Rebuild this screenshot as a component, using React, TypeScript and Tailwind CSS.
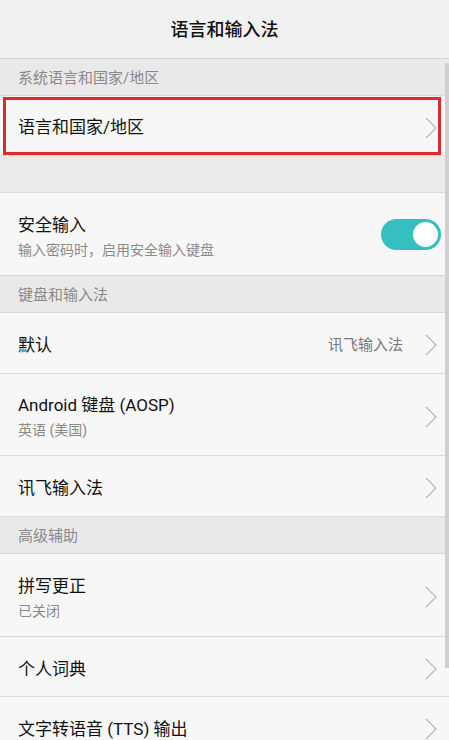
import React from 'react';

const font = { fontFamily: '"Roboto", "Noto Sans CJK SC", sans-serif' };

const Chevron = () => (
    <svg width="12" height="22" viewBox="0 0 12 22" className="shrink-0">
        <path d="M1 1 L11 11 L1 21" fill="none" stroke="#b8b8b8" strokeWidth="1.2" />
    </svg>
);

const Section = ({ title }: { title: string }) => (
    <div className="h-[37px] bg-[#e9e9e9] border-b border-[#d9d9d9] flex items-center pl-[18px] pt-[2px] text-[15px] text-[#8a8a8a]">{title}</div>
);

const Row = ({ title, sub, value, h = 'h-[60px]' }: { title: string; sub?: string; value?: string; h?: string }) => (
    <div className={`${h} bg-[#f7f7f7] border-b border-[#dcdcdc] flex items-center pl-[18px] pr-[12px] pt-[4px]`}>
        <div className="flex-1">
            <div className="text-[17px] text-[#111] leading-[24px]">{title}</div>
            {sub && <div className="text-[14px] text-[#8a8a8a] leading-[20px] mt-[3px]">{sub}</div>}
        </div>
        {value && <span className="text-[15px] text-[#777] mr-[22px]">{value}</span>}
        <Chevron />
    </div>
);

const App = () => {
    return (
        <div className="w-[449px] h-[740px] overflow-hidden bg-[#ebebeb] relative" style={font}>
            <div className="h-[59px] bg-[#f1f1f1] border-b border-[#d6d6d6] flex items-center justify-center">
                <h1 className="text-[18px] font-medium text-[#111]">语言和输入法</h1>
            </div>
            <Section title="系统语言和国家/地区" />
            <div className="h-[60px] bg-[#f7f7f7] border-b border-[#dcdcdc] pl-[3px] pr-[8px] pt-[1px]">
                <div className="h-[58px] border-[3px] border-[#dd2a2a] flex items-center pl-[12px] pr-[1px] pt-[4px]">
                    <span className="flex-1 text-[17px] text-[#111]">语言和国家/地区</span>
                    <Chevron />
                </div>
            </div>
            <div className="h-[37px] bg-[#ebebeb] border-b border-[#dcdcdc]" />
            <div className="h-[83px] bg-[#f7f7f7] border-b border-[#d6d6d6] flex items-center pl-[18px] pr-[8px]">
                <div className="flex-1 pt-[4px]">
                    <div className="text-[17px] text-[#111] leading-[24px]">安全输入</div>
                    <div className="text-[14px] text-[#8a8a8a] leading-[20px] mt-[3px]">输入密码时，启用安全输入键盘</div>
                </div>
                <div className="w-[60px] h-[31px] rounded-full bg-[#35bfc0] flex items-center justify-end pr-[3px]">
                    <div className="w-[25px] h-[25px] rounded-full bg-white" />
                </div>
            </div>
            <Section title="键盘和输入法" />
            <Row title="默认" value="讯飞输入法" h="h-[61px]" />
            <Row title="Android 键盘 (AOSP)" sub="英语 (美国)" h="h-[82px]" />
            <Row title="讯飞输入法" h="h-[61px]" />
            <Section title="高级辅助" />
            <Row title="拼写更正" sub="已关闭" h="h-[83px]" />
            <Row title="个人词典" h="h-[60px]" />
            <Row title="文字转语音 (TTS) 输出" h="h-[60px]" />
            <div className="absolute right-0 top-[63px] w-[4px] h-[605px] bg-[#d0d0d0] rounded-t-[2px]" />
        </div>
    );
};

export default App;
